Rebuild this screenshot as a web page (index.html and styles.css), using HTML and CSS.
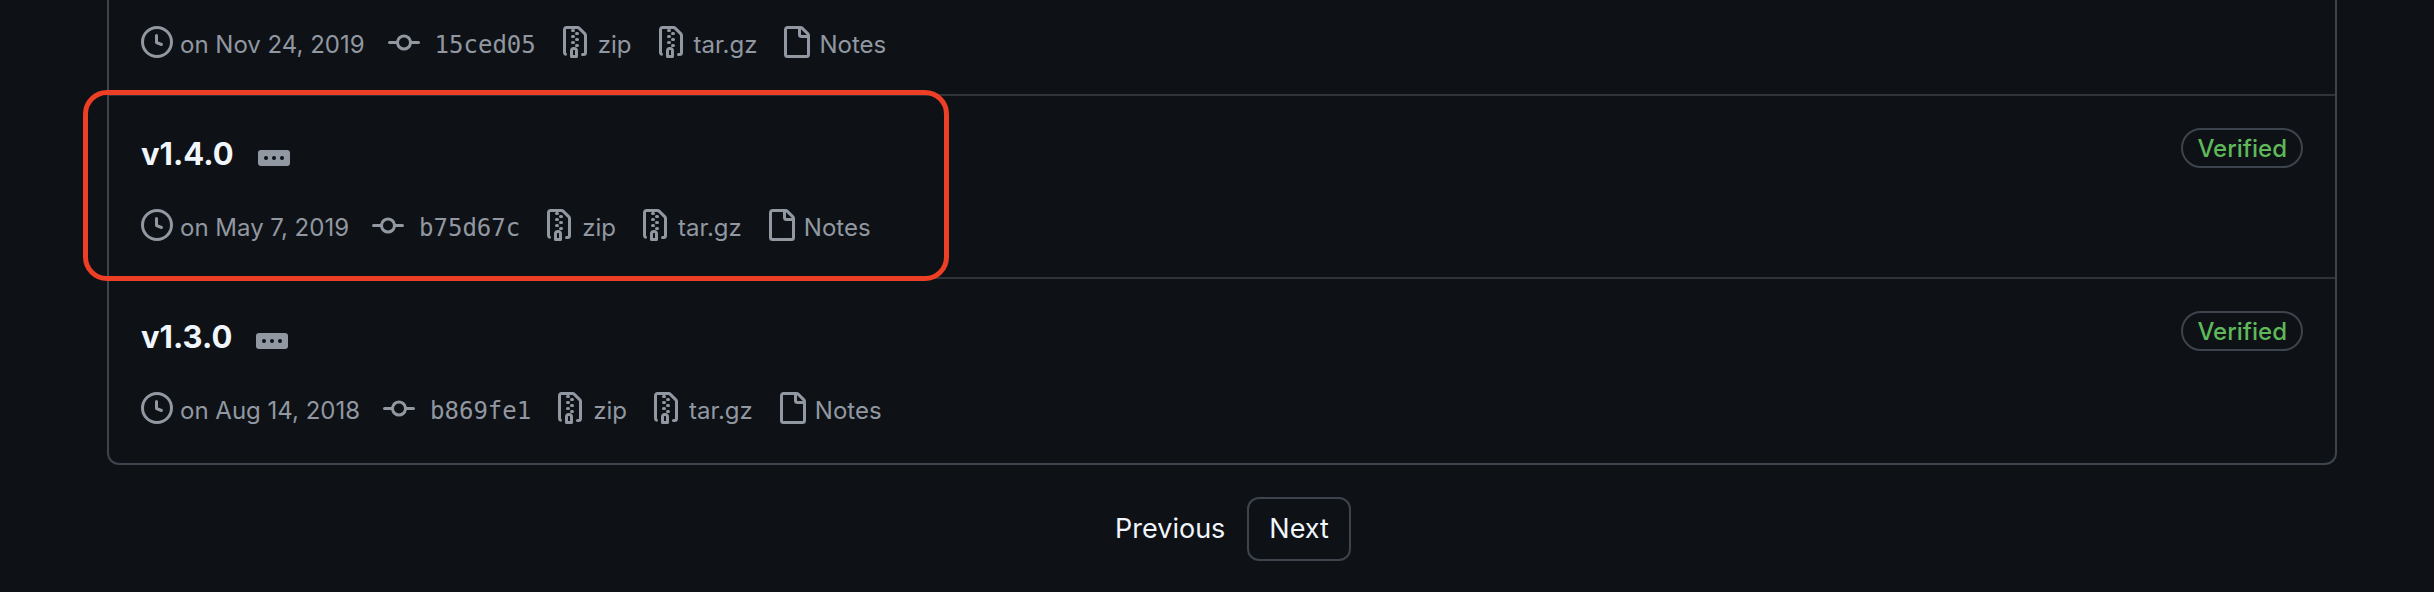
FILE: index.html
```html
<!DOCTYPE html>
<html lang="en">
<head>
<meta charset="utf-8">
<title>Tags</title>
<link rel="stylesheet" href="styles.css">
</head>
<body>
<svg class="sprite" aria-hidden="true">
  <symbol id="clock" viewBox="0 0 16 16"><path d="M8 0a8 8 0 1 1 0 16A8 8 0 0 1 8 0ZM1.5 8a6.5 6.5 0 1 0 13 0 6.5 6.5 0 0 0-13 0Zm7-3.25v2.992l2.028.812a.75.75 0 0 1-.557 1.392l-2.5-1A.751.751 0 0 1 7 8.25v-3.5a.75.75 0 0 1 1.5 0Z"/></symbol>
  <symbol id="commit" viewBox="0 -0.5 16 16"><path d="M11.93 8.5a4.002 4.002 0 0 1-7.86 0H.75a.75.75 0 0 1 0-1.5h3.32a4.002 4.002 0 0 1 7.86 0h3.32a.75.75 0 0 1 0 1.5Zm-1.43-.75a2.5 2.5 0 1 0-5 0 2.5 2.5 0 0 0 5 0Z"/></symbol>
  <symbol id="archive" viewBox="0 0 16 16"><path d="M3.5 1.75v11.5c0 .09.048.173.126.217a.75.75 0 0 1-.752 1.298A1.748 1.748 0 0 1 2 13.25V1.75C2 .784 2.784 0 3.75 0h5.586c.464 0 .909.185 1.237.513l2.914 2.914c.329.328.513.773.513 1.237v8.586A1.75 1.75 0 0 1 12.25 15h-.5a.75.75 0 0 1 0-1.5h.5a.25.25 0 0 0 .25-.25V4.664a.25.25 0 0 0-.073-.177L9.513 1.573a.25.25 0 0 0-.177-.073H7.25a.75.75 0 0 1 0 1.5h-.5a.75.75 0 0 1 0-1.5h-3a.25.25 0 0 0-.25.25Zm3.75 8.75h.5c.966 0 1.75.784 1.75 1.75v3a.75.75 0 0 1-.75.75h-2.5a.75.75 0 0 1-.75-.75v-3c0-.966.784-1.75 1.75-1.75ZM6 5.25a.75.75 0 0 1 .75-.75h.5a.75.75 0 0 1 0 1.5h-.5A.75.75 0 0 1 6 5.25Zm.75 2.25h.5a.75.75 0 0 1 0 1.5h-.5a.75.75 0 0 1 0-1.5ZM8 6.75A.75.75 0 0 1 8.75 6h.5a.75.75 0 0 1 0 1.5h-.5A.75.75 0 0 1 8 6.75ZM8.75 3h.5a.75.75 0 0 1 0 1.5h-.5a.75.75 0 0 1 0-1.5ZM8 9.75A.75.75 0 0 1 8.75 9h.5a.75.75 0 0 1 0 1.5h-.5A.75.75 0 0 1 8 9.75Zm-1 2.5v2.25h1v-2.25a.25.25 0 0 0-.25-.25h-.5a.25.25 0 0 0-.25.25Z"/></symbol>
  <symbol id="file" viewBox="0 0 16 16"><path d="M2 1.75C2 .784 2.784 0 3.75 0h6.586c.464 0 .909.184 1.237.513l2.914 2.914c.329.328.513.773.513 1.237v9.586A1.75 1.75 0 0 1 13.25 16h-9.5A1.75 1.75 0 0 1 2 14.25Zm1.75-.25a.25.25 0 0 0-.25.25v12.5c0 .138.112.25.25.25h9.5a.25.25 0 0 0 .25-.25V6h-2.75A1.75 1.75 0 0 1 9 4.25V1.5Zm6.75.062V4.25c0 .138.112.25.25.25h2.688l-.011-.013-2.914-2.914-.013-.011Z"/></symbol>
</svg>
<main class="page">
  <div class="tags">
    <article class="tag tag-partial">
      <ul class="meta">
        <li class="meta-item"><svg class="icon"><use href="#clock"/></svg><span>on Nov 24, 2019</span></li>
        <li><a class="meta-item meta-commit" href="#"><svg class="icon"><use href="#commit"/></svg><code>15ced05</code></a></li>
        <li><a class="meta-item" href="#"><svg class="icon"><use href="#archive"/></svg><span>zip</span></a></li>
        <li><a class="meta-item" href="#"><svg class="icon"><use href="#archive"/></svg><span>tar.gz</span></a></li>
        <li><a class="meta-item" href="#"><svg class="icon"><use href="#file"/></svg><span>Notes</span></a></li>
      </ul>
    </article>
    <article class="tag tag-highlighted">
      <div class="tag-head">
        <h2 class="tag-name"><a href="#">v1.4.0</a></h2>
        <button class="expander" type="button" aria-label="Toggle message"><i></i><i></i><i></i></button>
        <button class="verified" type="button">Verified</button>
      </div>
      <ul class="meta">
        <li class="meta-item"><svg class="icon"><use href="#clock"/></svg><span>on May 7, 2019</span></li>
        <li><a class="meta-item meta-commit" href="#"><svg class="icon"><use href="#commit"/></svg><code>b75d67c</code></a></li>
        <li><a class="meta-item" href="#"><svg class="icon"><use href="#archive"/></svg><span>zip</span></a></li>
        <li><a class="meta-item" href="#"><svg class="icon"><use href="#archive"/></svg><span>tar.gz</span></a></li>
        <li><a class="meta-item" href="#"><svg class="icon"><use href="#file"/></svg><span>Notes</span></a></li>
      </ul>
    </article>
    <article class="tag">
      <div class="tag-head">
        <h2 class="tag-name"><a href="#">v1.3.0</a></h2>
        <button class="expander" type="button" aria-label="Toggle message"><i></i><i></i><i></i></button>
        <button class="verified" type="button">Verified</button>
      </div>
      <ul class="meta">
        <li class="meta-item"><svg class="icon"><use href="#clock"/></svg><span>on Aug 14, 2018</span></li>
        <li><a class="meta-item meta-commit" href="#"><svg class="icon"><use href="#commit"/></svg><code>b869fe1</code></a></li>
        <li><a class="meta-item" href="#"><svg class="icon"><use href="#archive"/></svg><span>zip</span></a></li>
        <li><a class="meta-item" href="#"><svg class="icon"><use href="#archive"/></svg><span>tar.gz</span></a></li>
        <li><a class="meta-item" href="#"><svg class="icon"><use href="#file"/></svg><span>Notes</span></a></li>
      </ul>
    </article>
  </div>
  <nav class="pagination" aria-label="Pagination">
    <a class="page-link" href="#">Previous</a>
    <a class="page-link page-link-outlined" href="#">Next</a>
  </nav>
</main>
</body>
</html>
```
FILE: styles.css
```css
*,
*::after {
  box-sizing: border-box;
}

body {
  margin: 0;
  background: #0e1116;
  color: #f0f6fc;
  font-family: Inter, "Liberation Sans", sans-serif;
  font-size: 24px;
}

a {
  color: inherit;
  text-decoration: none;
}

.sprite {
  display: none;
}

.page {
  padding: 0 97px 31px 107px;
}

.tags {
  border: 2px solid #3d444d;
  border-top: 0;
  border-radius: 0 0 12px 12px;
}

.tag {
  position: relative;
  padding: 32px 32px 30px;
}

.tag + .tag {
  border-top: 2px solid #30343a;
}

.tag:last-child {
  padding-bottom: 33px;
}

.tag-partial {
  padding-top: 26px;
}

.tag-highlighted {
  z-index: 1;
}

.tag-highlighted::after {
  content: "";
  position: absolute;
  top: -6px;
  bottom: -4px;
  left: -26px;
  width: 866px;
  border: 5px solid #ec3f25;
  border-radius: 24px;
  pointer-events: none;
}

.tag-head {
  display: flex;
  align-items: center;
  margin-bottom: 29px;
}

.tag-name {
  margin: 0;
  font-size: 31px;
  font-weight: 700;
  line-height: 52px;
}

.expander {
  display: flex;
  align-items: center;
  justify-content: center;
  gap: 4px;
  width: 32px;
  height: 16px;
  margin: 8px 0 0 24px;
  padding: 0;
  border: 0;
  border-radius: 3px;
  background: #9198a1;
}

.expander i {
  width: 4px;
  height: 4px;
  border-radius: 50%;
  background: #0e1116;
}

.verified {
  align-self: flex-start;
  height: 40px;
  margin-left: auto;
  padding: 1px 14px 0;
  border: 2px solid #3d444d;
  border-radius: 20px;
  background: transparent;
  color: #5fb85a;
  font: inherit;
  font-weight: 500;
  line-height: 35px;
}

.meta {
  display: flex;
  gap: 23px;
  margin: 0;
  padding: 0;
  list-style: none;
  color: #9198a1;
  line-height: 38px;
}

.meta-item {
  display: flex;
  align-items: flex-start;
  gap: 7px;
}

.meta-commit {
  gap: 15px;
}

.meta code {
  font-family: "DejaVu Sans Mono", monospace;
  font-size: 24px;
}

.icon {
  width: 32px;
  height: 32px;
  fill: currentColor;
}

.pagination {
  display: flex;
  justify-content: center;
  padding-top: 32px;
}

.page-link {
  padding: 0 20px;
  border: 2px solid transparent;
  border-radius: 12px;
  font-size: 27px;
  line-height: 60px;
}

.page-link-outlined {
  border-color: #3d444d;
}
```
